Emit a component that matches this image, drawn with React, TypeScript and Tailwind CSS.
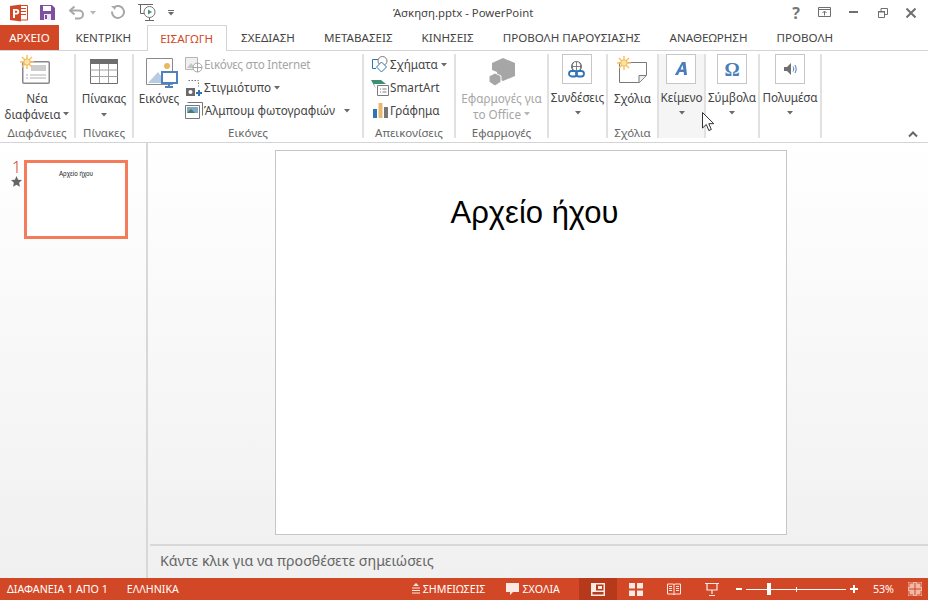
import type { ReactNode } from "react"

const font = { fontFamily: '"Noto Sans", "Open Sans", sans-serif' }

const tabs = ["ΚΕΝΤΡΙΚΗ", "ΕΙΣΑΓΩΓΗ", "ΣΧΕΔΙΑΣΗ", "ΜΕΤΑΒΑΣΕΙΣ", "ΚΙΝΗΣΕΙΣ", "ΠΡΟΒΟΛΗ ΠΑΡΟΥΣΙΑΣΗΣ", "ΑΝΑΘΕΩΡΗΣΗ", "ΠΡΟΒΟΛΗ"]

function Caret({ light = false }: { light?: boolean }) {
  return (
    <svg width="6" height="4" viewBox="0 0 6 4" className="inline-block shrink-0">
      <path d="M0 0h6L3 3.500z" fill={light ? "#b5b5b5" : "#6a6a6a"} />
    </svg>
  )
}

function Spark() {
  return (
    <svg width="14" height="14" viewBox="0 0 14 14" className="absolute left-0 top-0">
      <g stroke="#f7c268" strokeWidth="1.500">
        <path d="M7 0v14M0 7h14M2 2l10 10M12 2L2 12" />
      </g>
      <circle cx="7" cy="7" r="3.200" fill="#fde3a8" stroke="#f3b84c" />
    </svg>
  )
}

function Group({ w, label, hover, children }: { w: string; label?: string; hover?: boolean; children: ReactNode }) {
  return (
    <div className={`${w} ${hover ? "bg-[#f5f5f5]" : ""} relative flex h-[84px] shrink-0 flex-col border-r-2 border-[#e1e1e1]`}>
      <div className="flex flex-1">{children}</div>
      <div className="h-[13px] text-center text-[11.500px] leading-[16px] text-[#666]">{label ?? "\u00a0"}</div>
    </div>
  )
}

function BoxButton({ label, icon, shift }: { label: string; icon: ReactNode; shift?: boolean }) {
  return (
    <div className="flex w-full flex-col items-center">
      <div className={`${shift ? "mr-[2px]" : ""} flex h-[30px] w-[30px] items-center justify-center border border-[#c6c6c6] bg-white`}>{icon}</div>
      <div className="mt-[5px] text-[11.700px] leading-[16px] whitespace-nowrap">{label}</div>
      <div className="mt-[5px] flex h-[6px] items-center"><Caret /></div>
    </div>
  )
}

function SmallRow({ icon, text, caret, disabled, gap, tight }: { icon: ReactNode; text: string; caret?: boolean; disabled?: boolean; gap?: string; tight?: boolean }) {
  return (
    <div className={`flex h-[23px] items-center whitespace-nowrap text-[11.700px] ${disabled ? "text-[#a6a6a6]" : ""}`}>
      <div className="mr-[1px] flex h-[20px] w-[18px] shrink-0 items-center justify-center">{icon}</div>
      <span className={tight ? "tracking-[-0.25px]" : ""}>{text}</span>
      {caret && <span className={`${gap ?? "ml-[3px]"} flex items-center`}><Caret /></span>}
    </div>
  )
}

export default function App() {
  return (
    <div className="flex h-[600px] w-[928px] flex-col overflow-hidden bg-white text-[#444]" style={font}>
      {/* title bar */}
      <div className="relative flex h-[25px] shrink-0 items-center">
        <div className="flex items-center">
          <svg width="18" height="18" viewBox="0 0 18 18" className="ml-[10px]">
            <path d="M7 1.500h10.500v14.500H7z" fill="#fff" stroke="#d24726" />
            <path d="M10 4.500h6M10 7.500h6M10 10.500h6" stroke="#d24726" />
            <path d="M0 2l11-1.500v17L0 16z" fill="#d24726" />
            <path d="M3 5h3.500a2.500 2.500 0 010 5.500H5V14H3zM5 6.800v2h1.300a1 1 0 000-2z" fill="#fff" fillRule="evenodd" />
          </svg>
          <svg width="15" height="15" viewBox="0 0 15 15" className="ml-[12px]">
            <path d="M0 0h12l3 3v12H0z" fill="#7f4fa0" />
            <path d="M3 1h8v5H3z" fill="#fff" />
            <path d="M4 9h7v6H4z" fill="#efe8f4" />
            <path d="M5 10h2v4H5z" fill="#7f4fa0" />
          </svg>
          <svg width="16" height="14" viewBox="0 0 16 14" className="ml-[14px]" fill="none">
            <path d="M2 4.500h8a4 4 0 010 8H6" stroke="#a8a8a8" strokeWidth="2" />
            <path d="M5.500 0.500L1 4.500l4.500 4" stroke="#a8a8a8" strokeWidth="2" />
          </svg>
          <span className="ml-[5px] flex"><Caret light /></span>
          <svg width="15" height="15" viewBox="0 0 15 15" className="ml-[14px]" fill="none">
            <path d="M4 2.500a6 6 0 11-2 4" stroke="#a8a8a8" strokeWidth="2" />
            <path d="M1 1l5 0-1 4z" fill="#a8a8a8" />
          </svg>
          <svg width="20" height="19" viewBox="0 0 20 19" className="ml-[13px]" fill="none">
            <path d="M0 1.500h15M2.500 1.500v9h5M7 17.500h9M11.500 14v3" stroke="#666" />
            <circle cx="11.500" cy="9" r="5.500" fill="#fff" stroke="#777" />
            <path d="M10 6.500v5l4-2.500z" fill="#3d9a6c" />
          </svg>
          <svg width="6" height="7" viewBox="0 0 6 7" className="ml-[10px]">
            <path d="M0 1h6v1H0zM0 3h6L3 6.500z" fill="#6a6a6a" />
          </svg>
        </div>
        <div className="absolute left-[393px] top-[4px] text-[11.400px] leading-[17px] text-[#444]">Άσκηση.pptx - PowerPoint</div>
        <div className="ml-auto flex items-center pr-[12px] text-[#777]">
          <span className="text-[16px] leading-none font-bold">?</span>
          <svg width="14" height="11" viewBox="0 0 14 11" className="ml-[18px]" fill="none">
            <path d="M.5.500h12v9H.5zM1 2.500h12M6.500 8.500V4.500M4.500 6l2-2 2 2" stroke="#6f6f6f" />
          </svg>
          <svg width="10" height="3" viewBox="0 0 10 3" className="ml-[17px]"><path d="M0 0h9v2H0z" fill="#6f6f6f" /></svg>
          <svg width="10" height="10" viewBox="0 0 10 10" className="ml-[19px]" fill="none">
            <path d="M.5 3.500h6v6h-6zM3 3V.500h6.500v6H7" stroke="#6f6f6f" />
            <path d="M0 3h7v1.500H0z" fill="#6f6f6f" />
          </svg>
          <svg width="10" height="10" viewBox="0 0 10 10" className="ml-[18px]" fill="none">
            <path d="M.500.500l9 9M9.500.500l-9 9" stroke="#6f6f6f" strokeWidth="2" />
          </svg>
        </div>
      </div>

      {/* tabs */}
      <div className="relative flex h-[25px] shrink-0 items-stretch text-[11.600px] leading-[25px]">
        <div className="mr-[2px] w-[59px] bg-[#d24726] text-center text-white">ΑΡΧΕΙΟ</div>
        {tabs.map((t) => (
          <div
            key={t}
            className={
              t === "ΕΙΣΑΓΩΓΗ"
                ? "relative z-10 -mb-px ml-px w-[80px] border-x border-t border-[#d4d4d4] bg-white text-center text-[#d24726]"
                : "px-[14.500px] whitespace-nowrap text-[#444]"
            }
          >
            {t}
          </div>
        ))}
      </div>

      {/* ribbon */}
      <div className="relative flex h-[93px] shrink-0 items-start border-y border-[#d4d4d4] pt-[3px] text-[#444]">
        <Group w="w-[76px]" label="Διαφάνειες">
          <div className="flex w-full flex-col items-center pt-[1px] text-[11.700px] leading-[16px]">
            <div className="relative mr-[4px] h-[29px] w-[30px]">
              <svg width="28" height="23" viewBox="0 0 28 23" className="absolute bottom-0 right-0" fill="none">
                <rect x=".75" y=".75" width="26.500" height="21.500" rx="1" fill="#fff" stroke="#8a8a8a" strokeWidth="1.500" />
                <path d="M9 4h15v6H9z" fill="#cdcdcd" />
                <path d="M8 14h16M8 17h16M4 14h2M4 17h2" stroke="#b0b0b0" />
              </svg>
              <Spark />
            </div>
            <div className="mt-[6px]">Νέα</div>
            <div className="mt-[0px] flex items-center gap-[3px]">διαφάνεια<Caret /></div>
          </div>
        </Group>
        <Group w="w-[58px]" label="Πίνακες">
          <div className="flex w-full flex-col items-center pt-[5px] text-[11.700px] leading-[16px]">
            <svg width="28" height="25" viewBox="0 0 28 25" fill="none">
              <path d="M.5 5v19.500h27V5" stroke="#6d6d6d" />
              <path d="M.5 11h27M.5 17.500h27M9.500 5v19M18.500 5v19" stroke="#a0a0a0" />
              <path d="M0 0h28v5H0z" fill="#6d6d6d" />
            </svg>
            <div className="mt-[6px]">Πίνακας</div>
            <div className="mt-[7px] flex"><Caret /></div>
          </div>
        </Group>
        <Group w="w-[230px]" label="Εικόνες">
          <div className="flex w-[50px] flex-col items-center pt-[4px] text-[11.700px] leading-[16px]">
            <svg width="32" height="31" viewBox="0 0 32 31" fill="none" className="ml-[5px]">
              <path d="M.5.500h26v26H.5z" fill="#fff" stroke="#8a8a8a" />
              <circle cx="21" cy="8" r="3" fill="#eab95c" />
              <path d="M2 25l10-11 8 11z" fill="#b7cbe3" />
              <path d="M16 14h15v11H16z" fill="#fff" stroke="#4f81bd" strokeWidth="2" />
              <path d="M23 25v3M19 29h8" stroke="#4f81bd" strokeWidth="2" />
            </svg>
            <div className="mt-[1px]">Εικόνες</div>
          </div>
          <div className="-mt-[1px] flex flex-col pl-[1px]">
            <SmallRow
              disabled
              tight
              text="Εικόνες στο Internet"
              icon={
                <svg width="18" height="16" viewBox="0 0 18 16" fill="none">
                  <path d="M.5.500h12v12H.5z" fill="#f0f0f0" stroke="#b5b5b5" />
                  <path d="M2 11l4-5 4 5z" fill="#c5c5c5" />
                  <circle cx="12.500" cy="10.500" r="4.500" fill="#fff" stroke="#a5a5a5" />
                  <path d="M8 10.500h9M12.500 6v9" stroke="#a5a5a5" />
                </svg>
              }
            />
            <SmallRow
              text="Στιγμιότυπο"
              caret
              icon={
                <svg width="18" height="18" viewBox="0 0 18 18" fill="none">
                  <path d="M3.500 1.500h10v6" stroke="#777" strokeDasharray="1.500 1.500" />
                  <path d="M1 9h9v8H1z" fill="#6a6a6a" />
                  <circle cx="5.500" cy="13" r="2" fill="#fff" />
                  <path d="M11 14h6M14 11v6" stroke="#2f75b5" strokeWidth="2" />
                </svg>
              }
            />
            <SmallRow
              text="Άλμπουμ φωτογραφιών"
              caret
              gap="ml-[9px]"
              icon={
                <svg width="18" height="17" viewBox="0 0 18 17" fill="none">
                  <path d="M.5 3.500h14v13H.5z" fill="#fff" stroke="#777" />
                  <path d="M2.500.500h15v13" stroke="#777" />
                  <path d="M2 5h11v6H2z" fill="#7fa8cf" />
                  <path d="M2 11l4-4 4 4z" fill="#4f7f4f" />
                </svg>
              }
            />
          </div>
        </Group>
        <Group w="w-[92px]" label="Απεικονίσεις">
          <div className="-mt-[1px] flex flex-col pl-[7px]">
            <SmallRow
              text="Σχήματα"
              caret
              icon={
                <svg width="17" height="17" viewBox="0 0 17 17" fill="none">
                  <path d="M6 3.500H.5v9H4" stroke="#2f75b5" />
                  <circle cx="10.500" cy="5" r="4.500" fill="#fff" stroke="#7a7a7a" />
                  <path d="M9.500 6l5 5-5 5-5-5z" fill="#fff" stroke="#2f75b5" />
                </svg>
              }
            />
            <SmallRow
              text="SmartArt"
              icon={
                <svg width="18" height="16" viewBox="0 0 18 16" fill="none">
                  <path d="M0 0h10l5 4H3l2 5z" fill="#3d8f72" />
                  <path d="M6.500 5.500h11v10h-11z" fill="#fff" stroke="#7a7a7a" />
                  <path d="M9 9h1M9 12h1M11.500 9h4M11.500 12h4" stroke="#7a7a7a" />
                </svg>
              }
            />
            <SmallRow
              text="Γράφημα"
              icon={
                <svg width="15" height="15" viewBox="0 0 15 15">
                  <path d="M0 6h4v9H0z" fill="#2f75b5" />
                  <path d="M5.500 0h4v15h-4z" fill="#e6b96b" />
                  <path d="M11 4h4v11h-4z" fill="#777" />
                </svg>
              }
            />
          </div>
        </Group>
        <Group w="w-[93px]" label="Εφαρμογές">
          <div className="flex w-full flex-col items-center pt-[4px] text-[11.700px] leading-[16px] text-[#a6a6a6]">
            <svg width="28" height="28" viewBox="0 0 28 28">
              <path d="M15 0l12 5v13l-12 5-6-3v-6l-5-2V5z" fill="#a6a6a6" />
              <path d="M7 15l6 3v6l-6 4-6-4v-6z" fill="#a6a6a6" stroke="#fff" />
            </svg>
            <div className="mt-[4px] whitespace-nowrap">Εφαρμογές για</div>
            <div className="flex items-center gap-[3px]">το Office<Caret light /></div>
          </div>
        </Group>
        <Group w="w-[59px]">
          <BoxButton
            shift
            label="Συνδέσεις"
            icon={
              <svg width="17" height="17" viewBox="0 0 17 17" fill="none">
                <circle cx="8.500" cy="5.500" r="5" stroke="#666" />
                <path d="M3.500 5.500h10M8.500.500v10M5.500 1c-1.500 3-1.500 6 0 9M11.500 1c1.500 3 1.500 6 0 9" stroke="#666" strokeWidth=".8" />
                <rect x="1" y="10" width="8" height="5.500" rx="2.700" fill="#fff" stroke="#2f75b5" strokeWidth="1.800" />
                <rect x="8" y="10" width="8" height="5.500" rx="2.700" stroke="#2f75b5" strokeWidth="1.800" />
              </svg>
            }
          />
        </Group>
        <Group w="w-[51px]" label="Σχόλια">
          <div className="flex w-full flex-col items-center pt-[2px] text-[11.700px] leading-[16px]">
            <div className="relative mr-[2px] h-[27px] w-[30px]">
              <svg width="28" height="21" viewBox="0 0 28 21" className="absolute bottom-0 right-0" fill="none">
                <path d="M.5.500h27v13l-7 7H.500z" fill="#fff" stroke="#7a7a7a" />
                <path d="M27 13.500h-7v7" fill="#eee" stroke="#7a7a7a" />
              </svg>
              <Spark />
            </div>
            <div className="mt-[7px]">Σχόλια</div>
          </div>
        </Group>
        <Group w="w-[47px]" hover>
          <BoxButton
            shift
            label="Κείμενο"
            icon={
              <svg width="14" height="14" viewBox="0 0 14 14">
                <path d="M8 0h3.500L13 13h-3l-.3-3H5.500L4 13H.800zM8.600 3L6.600 7.500h2.800z" fill="#4a7ebb" fillRule="evenodd" />
              </svg>
            }
          />
        </Group>
        <Group w="w-[54px]">
          <BoxButton
            label="Σύμβολα"
            icon={<span className="text-[19px] leading-none font-bold text-[#4a7ebb]" style={{ fontFamily: '"Liberation Serif", serif' }}>Ω</span>}
          />
        </Group>
        <Group w="w-[62px]">
          <BoxButton
            label="Πολυμέσα"
            icon={
              <svg width="13" height="12" viewBox="0 0 13 12" fill="none">
                <path d="M0 4h3l4-4v12L3 8H0z" fill="#6f6f6f" />
                <path d="M9 3.500c1 1.500 1 3.500 0 5M11 2c1.500 2.500 1.500 5.500 0 8" stroke="#4a7ebb" />
              </svg>
            }
          />
        </Group>
        <svg width="10" height="7" viewBox="0 0 10 7" className="absolute right-[10px] top-[80px]" fill="none">
          <path d="M1 5.500l4-4 4 4" stroke="#666" strokeWidth="2" />
        </svg>
      </div>

      {/* work area */}
      <div className="flex min-h-0 flex-1 bg-gradient-to-b from-white to-[#f0f0f0]">
        <div className="flex w-[148px] shrink-0 border-r-2 border-[#d8d8d8] pl-[9px] pt-[14px]">
          <div className="flex w-[15px] flex-col items-center">
            <span className="text-[16px] leading-[20px] font-light text-[#d24726]">1</span>
            <svg width="11" height="11" viewBox="0 0 11 11" className="mt-[-1px]">
              <path d="M5.500 0l1.600 3.700 3.900.4-2.900 2.600.8 4-3.400-2-3.400 2 .8-4L0 4.100l3.900-.4z" fill="#666" />
            </svg>
          </div>
          <div className="mt-[3px] flex h-[79px] w-[104px] justify-center border-[3px] border-[#f47c5a] bg-white">
            <span className="mt-[7px] text-[6.300px] leading-[8px] text-[#222]" style={{ fontFamily: '"Liberation Sans", sans-serif' }}>Αρχείο ήχου</span>
          </div>
        </div>
        <div className="flex min-w-0 flex-1 flex-col">
          <div className="flex flex-1 justify-center pr-[14px] pt-[7px]">
            <div className="flex h-[385px] w-[512px] justify-center border border-[#c6c6c6] bg-white pl-[7px] pt-[42px]">
              <span className="text-[31px] leading-[40px] text-black" style={{ fontFamily: '"Liberation Sans", sans-serif' }}>Αρχείο ήχου</span>
            </div>
          </div>
          <div className="ml-[2px] h-[34px] border-t-2 border-[#d8d8d8] pl-[10px] text-[14.200px] leading-[30px] text-[#666]">Κάντε κλικ για να προσθέσετε σημειώσεις</div>
        </div>
      </div>

      {/* status bar */}
      <div className="flex h-[22px] shrink-0 items-center bg-[#d24726] text-[10.700px] text-white">
        <span className="ml-[7px]">ΔΙΑΦΑΝΕΙΑ 1 ΑΠΟ 1</span>
        <span className="ml-[19px]">ΕΛΛΗΝΙΚΑ</span>
        <div className="ml-auto flex h-full items-center">
          <svg width="8" height="12" viewBox="0 0 8 12">
            <path d="M4 0l3 3H1zM0 4.500h8v1H0zM0 7h8v1H0zM0 9.500h8v1H0z" fill="#fbe9e3" />
          </svg>
          <span className="ml-[3px]">ΣΗΜΕΙΩΣΕΙΣ</span>
          <svg width="13" height="13" viewBox="0 0 13 13" className="ml-[21px]">
            <path d="M0 0h13v9H7l-3 3V9H0z" fill="#fbe9e3" />
          </svg>
          <span className="ml-[3px]">ΣΧΟΛΙΑ</span>
          <div className="ml-[19px] flex h-full w-[38px] items-center justify-center bg-[#b7391b]">
            <svg width="14" height="13" viewBox="0 0 14 13">
              <path d="M0 0h14v13H0zM5 1.500v6h7.500v-6zM1.500 9v2.500h11V9z" fill="#fbe9e3" fillRule="evenodd" />
              <path d="M7 3h4v3H7z" fill="#fbe9e3" />
            </svg>
          </div>
          <div className="flex w-[38px] justify-center">
            <svg width="14" height="13" viewBox="0 0 14 13">
              <path d="M0 0h6v5.500H0zM8 0h6v5.500H8zM0 7.500h6V13H0zM8 7.500h6V13H8z" fill="#fbe9e3" />
            </svg>
          </div>
          <div className="flex w-[38px] justify-center">
            <svg width="14" height="13" viewBox="0 0 14 13" fill="none">
              <path d="M.5 1h6l.5 1 .5-1h6v10h-6l-.5 1-.5-1h-6zM7 2v10M2 3.500h3M2 5.500h3M2 7.500h3M9 3.500h3M9 5.500h3M9 7.500h3" stroke="#fbe9e3" />
            </svg>
          </div>
          <div className="flex w-[38px] justify-center">
            <svg width="14" height="13" viewBox="0 0 14 13" fill="none">
              <path d="M0 .5h14M2 1v6h10V1M7 7v4M4 12.500h6" stroke="#fbe9e3" strokeWidth="1.200" />
            </svg>
          </div>
          <div className="ml-[5px] flex items-center">
            <div className="h-[2px] w-[6px] bg-white" />
            <div className="relative ml-[4px] h-[1px] w-[100px] bg-white">
              <div className="absolute left-[21px] top-[-6px] h-[12px] w-[4px] bg-white" />
              <div className="absolute left-[50px] top-[-2px] h-[5px] w-[1px] bg-white" />
            </div>
            <svg width="8" height="8" viewBox="0 0 8 8" className="ml-[4px]"><path d="M0 3h8v2H0zM3 0h2v8H3z" fill="#fff" /></svg>
          </div>
          <span className="ml-[15px]">53%</span>
          <svg width="14" height="14" viewBox="0 0 14 14" className="ml-[14px] mr-[6px]" fill="none">
            <path d="M0 0h14v14H0z" fill="#f0b8a6" />
            <path d="M5 1L1 1l0 4M9 1h4v4M1 9v4h4M13 9v4H9M1 7h12M7 1v12" stroke="#d24726" />
          </svg>
        </div>
      </div>

      {/* mouse pointer */}
      <svg width="13" height="20" viewBox="0 0 13 20" className="absolute left-[702px] top-[112px]">
        <path d="M.5.500v15.500l3.800-3.500 2.500 6 2.500-1-2.500-5.800h5z" fill="#fff" stroke="#333" />
      </svg>
    </div>
  )
}
